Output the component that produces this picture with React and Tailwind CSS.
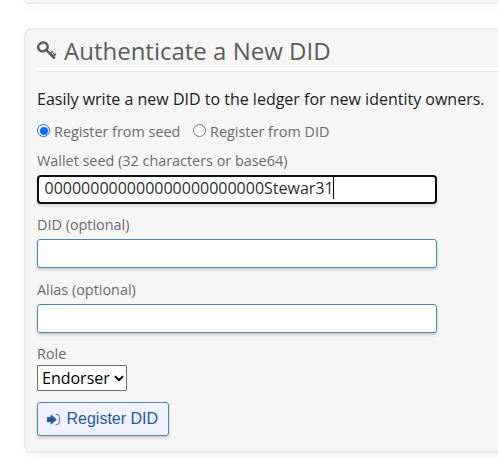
import React from "react";

function KeyIcon() {
  return (
    <svg className="-mt-px h-[19px] w-5 shrink-0" viewBox="0 0 20 19" fill="none" stroke="#5c5c5c">
      <ellipse cx="5.9" cy="5.9" rx="4.8" ry="4.3" strokeWidth="2.5" transform="rotate(-28 5.9 5.9)" />
      <path d="M8.8 8.7 L17.8 17.6" strokeWidth="2.5" />
      <path d="M13.2 13.1 L15.9 10 M16.1 15.8 L18.8 12.7" strokeWidth="1.8" />
      <path d="M14.9 14.5 L17.3 11.6" strokeWidth="1" />
    </svg>
  );
}

function LoginIcon() {
  return (
    <svg className="h-[11px] w-[13px] shrink-0" viewBox="0 0 13 11" fill="#1f5a99">
      <path d="M.5 3.4h3.7V1L9.2 5.5 4.2 10V7.6H.5z" stroke="#1f5a99" strokeWidth="1" strokeLinejoin="round" />
      <path d="M8.6 .6h1.7q2 0 2 2v5.8q0 2-2 2H8.6" fill="none" stroke="#1f5a99" strokeWidth="0.8" />
    </svg>
  );
}

function Field({ label, value, active }) {
  return (
    <div className={active ? "h-16" : "h-[65px]"}>
      <div className="h-7 pt-[4px] text-[14.4px] leading-[20px] text-[#6b6b6b]">{label}</div>
      <div
        className={
          active
            ? "flex h-[29px] w-[400px] items-start rounded-[4px] border-2 border-[#101010] bg-white px-[5.5px] text-[16px] leading-[22px] text-[#303030] shadow-[0_2px_3px_rgba(0,0,0,0.12)]"
            : "flex h-[29px] w-[400px] rounded-[3px] border border-[#4d86ad] bg-white shadow-[0_2px_3px_rgba(0,0,0,0.18)]"
        }
      >
        {active && (
          <>
            <span>{value}</span>
            <span className="-ml-[0.5px] h-[22px] w-px bg-black" />
          </>
        )}
      </div>
    </div>
  );
}

export default function App() {
  return (
    <div className="h-[463px] w-[498px] overflow-hidden bg-white pl-6 font-['Open_Sans',sans-serif]">
      <div className="h-1 w-[520px] rounded-b-[8px] border-2 border-t-0 border-[#f0eaec] bg-[#f6f6f6] shadow-[0_3px_10px_rgba(0,0,0,0.05)]" />
      <section className="mt-6 h-[425px] w-[520px] rounded-[8px] border-2 border-[#f0eaec] bg-[#f6f6f6] pl-[11px] shadow-[0_3px_10px_rgba(0,0,0,0.05)]">
        <h1 className="flex h-[41px] items-center border-b-[3px] border-white pt-[4px] text-[24px] leading-[34px] text-[#5c5c5c]">
          <KeyIcon />
          <span className="ml-[7px] whitespace-nowrap">Authenticate a New DID</span>
        </h1>
        <div className="h-px bg-[#e5e5e5]" />
        <p className="mt-4 h-[22px] whitespace-nowrap text-[16px] leading-[22px] text-[#202020]">
          Easily write a new DID to the ledger for new identity owners.
        </p>
        <div className="mt-[10px] flex h-[22px] items-start text-[14.4px] leading-[20px] text-[#6b6b6b]">
          <span className="mt-1 flex size-[13px] items-center justify-center rounded-full border border-[#0b6cff] bg-white">
            <span className="size-[8px] rounded-full bg-[#0b6cff]" />
          </span>
          <span className="ml-1 w-[127px] whitespace-nowrap pt-0.5">Register from seed</span>
          <span className="ml-3 mt-1 size-[13px] rounded-full border border-[#767676] bg-white" />
          <span className="ml-1 whitespace-nowrap pt-0.5">Register from DID</span>
        </div>
        <div className="mt-[5px]">
          <Field label="Wallet seed (32 characters or base64)" value="000000000000000000000000Stewar31" active />
          <Field label="DID (optional)" />
          <Field label="Alias (optional)" />
        </div>
        <div className="h-6 pt-[3px] text-[14.4px] leading-[20px] text-[#6b6b6b]">Role</div>
        <div className="flex h-[26px] w-[90px] items-center rounded-[1px] border border-[#6b6b6b] bg-white pl-[4px] text-[16px] leading-[22px] text-black">
          <span>Endorser</span>
          <svg className="ml-[4px] h-[7px] w-[10px]" viewBox="0 0 10 7" fill="none" stroke="black" strokeWidth="2">
            <path d="M1 1.2l4 4 4-4" />
          </svg>
        </div>
        <button className="mt-[11px] flex h-[34px] w-[132px] items-center rounded-[3px] border border-[#4d86ad] bg-[#f0f2ff] pl-[9px] font-['Liberation_Sans',Arial,sans-serif] text-[16px] leading-[20px] text-[#1f5a99] shadow-[0_2px_3px_rgba(0,0,0,0.18)]">
          <LoginIcon />
          <span className="ml-[6.5px] whitespace-nowrap">Register DID</span>
        </button>
      </section>
    </div>
  );
}
